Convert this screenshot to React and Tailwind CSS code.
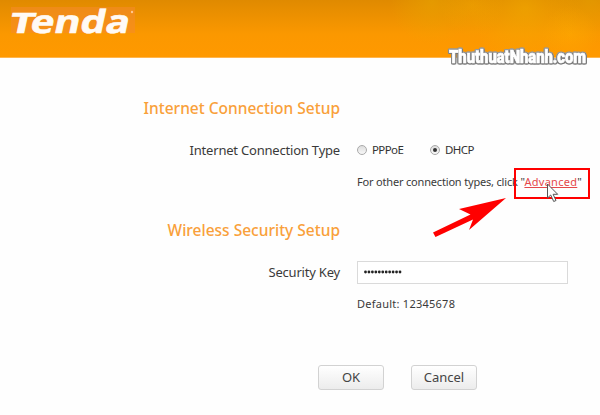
import { useState } from "react";

function Header() {
  return (
    <header className="relative h-[58px] shrink-0 border-b border-[#ffb54d] bg-linear-to-b from-[#e08a00] via-[#fb9800] via-60% to-[#ff9900]">
      <div className="absolute inset-0 bg-[radial-gradient(circle_at_432px_2px,#e8a80080_0,transparent_42px),radial-gradient(circle_at_525px_8px,#f2b00080_0,transparent_55px),radial-gradient(circle_at_472px_5px,#f4b00066_0,transparent_32px),radial-gradient(circle_at_570px_34px,#ffb00066_0,transparent_28px),radial-gradient(circle_at_590px_0px,#e6aa0066_0,transparent_45px)]" />
      <svg className="relative block" width="200" height="57" viewBox="0 0 200 57">
        <rect x="11" y="7" width="124" height="26" fill="#f58a2c" opacity="0.55" />
        <g
          transform="translate(11 32.5) skewX(-12)"
          fill="#fffaf5"
          stroke="#fffaf5"
          strokeWidth="0.6"
          fontFamily="'Open Sans', sans-serif"
          fontWeight="700"
        >
          <text x="-3" y="0" fontSize="28" textLength="25" lengthAdjust="spacingAndGlyphs">
            T
          </text>
          <text x="18" y="0" fontSize="32" textLength="99" lengthAdjust="spacingAndGlyphs">
            enda
          </text>
        </g>
        <circle cx="132" cy="12" r="1.200" fill="#ffc890" />
      </svg>
    </header>
  );
}

function Watermark() {
  return (
    <svg
      className="absolute left-[440px] top-[36px] overflow-visible [filter:drop-shadow(0_1px_0_#777)_drop-shadow(1px_0_0_#777)_drop-shadow(-1px_0_0_#888)_drop-shadow(0_-1px_0_#999)]"
      width="156"
      height="40"
      viewBox="0 0 156 40"
    >
      <text
        x="9"
        y="26.500"
        fontSize="18"
        fontWeight="900"
        fontFamily="Roboto, sans-serif"
        textLength="137"
        lengthAdjust="spacingAndGlyphs"
        fill="#fff"
        stroke="#fff"
        strokeWidth="0.7"
      >
        ThuthuatNhanh.com
      </text>
    </svg>
  );
}

function Radio({ label, checked, onChange }) {
  return (
    <label className="flex items-center text-[11.500px] tracking-[-0.6px] text-[#333]">
      <input type="radio" className="sr-only" checked={checked} onChange={onChange} />
      <span className="mr-[5px] flex size-[10px] items-center justify-center rounded-full border border-[#aaa] bg-linear-to-b from-[#ddd] to-[#f8f8f8]">
        {checked && <span className="size-[4px] rounded-full bg-[#333]" />}
      </span>
      {label}
    </label>
  );
}

function Button({ children }) {
  return (
    <button className="h-[25px] w-[66px] rounded-[3px] border border-[#d2d2d2] bg-linear-to-b from-white to-[#ececec] text-[13px] leading-none text-[#444]">
      {children}
    </button>
  );
}

export default function App() {
  const [type, setType] = useState("DHCP");

  return (
    <div className="relative flex h-[415px] w-[600px] flex-col overflow-hidden bg-[#fefefe] font-['Noto_Sans',sans-serif] text-[#3a3a3a]">
      <Header />
      <main>
        <h2 className="mt-[38px] w-[340px] text-right text-[15.500px] leading-6 font-medium text-[#f9a03a]">
          Internet Connection Setup
        </h2>
        <div className="mt-[18px] grid h-6 grid-cols-[340px_1fr] items-center gap-x-[17px]">
          <span className="pt-[2px] text-right text-[13px] tracking-[-0.2px]">
            Internet Connection Type
          </span>
          <div className="flex">
            <div className="w-[73px]">
              <Radio label="PPPoE" checked={type === "PPPoE"} onChange={() => setType("PPPoE")} />
            </div>
            <Radio label="DHCP" checked={type === "DHCP"} onChange={() => setType("DHCP")} />
          </div>
        </div>
        <p className="mt-[8px] ml-[357px] text-[11px] leading-6 tracking-[-0.18px] whitespace-nowrap">
          For other connection types, click{" "}
          <span className="tracking-[0.28px]">
            "<a className="text-[#e5484b] underline">Advanced</a>"
          </span>
        </p>
        <h2 className="mt-[24px] w-[340px] text-right text-[15.500px] leading-6 font-medium text-[#f9a03a]">
          Wireless Security Setup
        </h2>
        <div className="mt-[18px] grid h-6 grid-cols-[340px_211px] items-center gap-x-[17px]">
          <span className="pt-[2px] text-right text-[13px] tracking-[-0.2px]">Security Key</span>
          <div className="flex h-[23px] items-center border border-[#dadada] bg-white pl-[6px]">
            <svg width="40" height="4" viewBox="0 0 40 4">
              {Array.from({ length: 11 }, (_, i) => (
                <circle key={i} cx={1.5 + i * 3.45} cy="2" r="1.400" fill="#222" />
              ))}
            </svg>
          </div>
        </div>
        <p className="mt-[8px] ml-[357px] text-[11px] leading-6 tracking-[0.25px]">
          Default: 12345678
        </p>
        <div className="mt-[49px] ml-[318px] flex gap-[27px]">
          <Button>OK</Button>
          <Button>Cancel</Button>
        </div>
      </main>

      <Watermark />

      <div className="absolute left-[514px] top-[168px] h-[31px] w-[76px] border-2 border-[#f00]" />
      <svg className="absolute left-[430px] top-[190px]" width="80" height="50" viewBox="0 0 80 50">
        <path d="M76 8 29 19 40.500 24.500 3 42.500 5.500 47 43 29.500 39 40z" fill="#f00" />
      </svg>
      <svg className="absolute left-[546px] top-[183px]" width="14" height="20" viewBox="0 0 14 20">
        <path
          d="M1.500 1v14l3.200-3 3 6.500 2.300-1-2.900-6.200h4.600z"
          fill="#fff"
          stroke="#555"
        />
      </svg>
    </div>
  );
}
